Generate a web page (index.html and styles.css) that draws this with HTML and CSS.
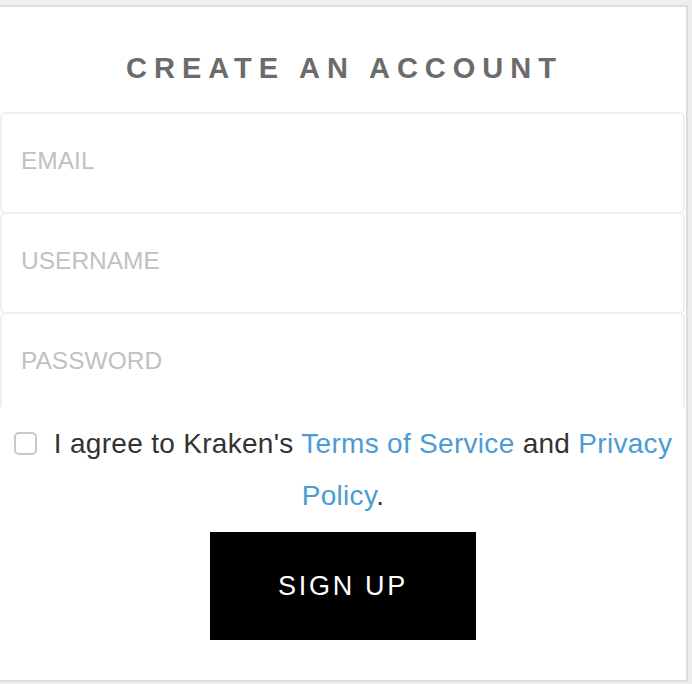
FILE: index.html
```html
<!DOCTYPE html>
<html>
<head>
<meta charset="utf-8">
<title>Create an account</title>
<link rel="stylesheet" href="styles.css">
</head>
<body>
<div class="card">
  <h1 class="title">CREATE AN ACCOUNT</h1>
  <div class="fields">
    <input class="field" type="email" placeholder="EMAIL">
    <input class="field" type="text" placeholder="USERNAME">
    <input class="field" type="password" placeholder="PASSWORD">
  </div>
  <p class="agree"><input class="check" type="checkbox"> I agree to Kraken's <a class="link" href="#">Terms of Service</a> and <a class="link" href="#">Privacy<br>Policy</a>.</p>
  <div class="actions">
    <button class="signup" type="button">SIGN UP</button>
  </div>
</div>
</body>
</html>
```

FILE: styles.css
```css
html, body {
  margin: 0;
  padding: 0;
  background: #eeeeee;
  overflow: hidden;
}

body {
  font-family: "Liberation Sans", Arial, sans-serif;
}

.card {
  box-sizing: content-box;
  width: 686px;
  height: 673px;
  margin: 5px 0 0 -2px;
  border: 2px solid #dddddd;
  background: #ffffff;
  display: flex;
  flex-direction: column;
}

.title {
  margin: 0;
  padding: 44px 0 0 3px;
  font-size: 29px;
  line-height: 35px;
  font-weight: bold;
  letter-spacing: 7px;
  text-align: center;
  color: #6b6b6b;
}

.fields {
  margin-top: 26px;
  height: 295px;
  overflow: hidden;
  display: flex;
  flex-direction: column;
}

.field {
  box-sizing: border-box;
  flex: none;
  width: 685px;
  height: 102px;
  margin: 0 0 -2px 0;
  padding: 0 0 4px 19px;
  border: 2px solid #efefef;
  border-radius: 6px;
  background: #ffffff;
  font-family: "Liberation Sans", Arial, sans-serif;
  font-size: 24.5px;
  color: #555555;
  outline: none;
}

.field::placeholder {
  color: #c4bfbf;
  opacity: 1;
}

.agree {
  margin: 11px 0 0 0;
  font-size: 28px;
  line-height: 52px;
  letter-spacing: 0.3px;
  text-align: center;
  color: #333333;
}

.check {
  -webkit-appearance: none;
  appearance: none;
  box-sizing: border-box;
  display: inline-block;
  width: 23px;
  height: 23px;
  margin: 0 9px 0 0;
  border: 2px solid #c8c8c8;
  border-radius: 5px;
  background: #ffffff;
  vertical-align: -2px;
}

.link {
  color: #4c9bd4;
  text-decoration: none;
}

.actions {
  margin-top: 10px;
  display: flex;
  justify-content: center;
}

.signup {
  width: 266px;
  height: 108px;
  border: 0;
  border-radius: 0;
  background: #000000;
  color: #ffffff;
  font-family: "Liberation Sans", Arial, sans-serif;
  font-size: 27px;
  letter-spacing: 2.7px;
  padding: 0;
  cursor: pointer;
}
```
